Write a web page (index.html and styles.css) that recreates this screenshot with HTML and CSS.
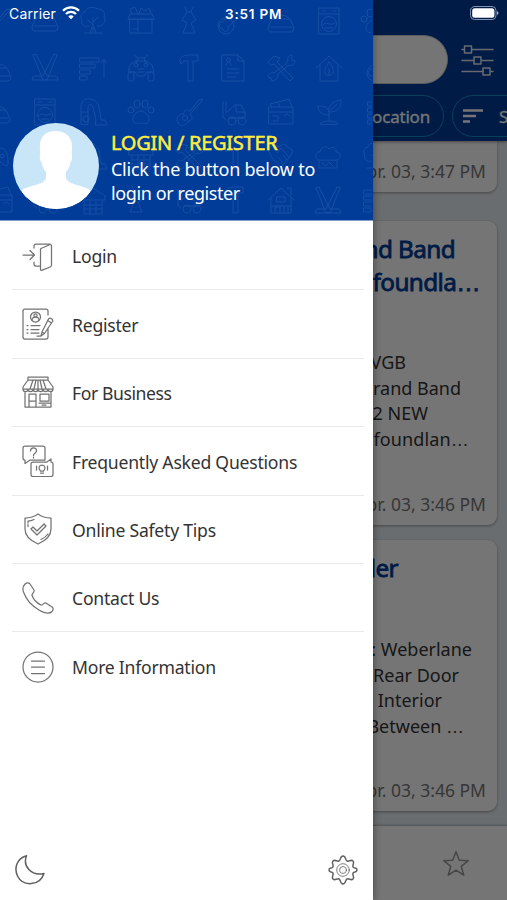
FILE: index.html
```html
<!DOCTYPE html>
<html lang="en">
<head>
<meta charset="utf-8">
<title>Menu</title>
<link rel="stylesheet" href="styles.css">
</head>
<body>
<div class="screen">
  <main class="app">
    <header class="topbar">
      <div class="searchrow">
        <div class="search"></div>
        <svg class="sliders" width="34" height="34" viewBox="0 0 34 34"><path d="M1 6.500h2M11 6.500h21M1 17.500h12M21 17.500h11M1 28.500h21M30 28.500h2"/><path d="M3.500 3h7v7h-7zM13 14h7v7h-7zM22 25h7v7h-7z"/></svg>
      </div>
      <div class="chips">
        <div class="chip chip-location">Location</div>
        <div class="chip chip-sort"><svg width="20" height="14" viewBox="0 0 20 14"><path d="M0 1.500h20M0 7h13M0 12.500h7"/></svg><span>Sort</span></div>
      </div>
    </header>
    <section class="feed">
      <article class="card first"><p class="date">Apr. 03, 3:47 PM</p></article>
      <article class="card second">
        <h2><span class="t1">nd Band</span><span class="t2">foundla<i>…</i></span></h2>
        <p class="body"><span class="a1">VGB</span><span class="a2">rand Band</span><span class="a3">2 NEW</span><span class="a4">foundlan<i>…</i></span></p>
        <p class="date">Apr. 03, 3:46 PM</p>
      </article>
      <article class="card third">
        <h2><span class="t3">ler</span></h2>
        <p class="body"><span class="b1">: Weberlane</span><span class="b2">Rear Door</span><span class="b3">Interior</span><span class="b4">Between <i>…</i></span></p>
        <p class="date">Apr. 03, 3:46 PM</p>
      </article>
    </section>
    <nav class="tabs"><svg width="28" height="28" viewBox="0 0 28 28"><path d="M14 1.800l3.300 8.500 9 .4-7.100 5.600 2.500 8.900L14 20.200l-7.700 5 2.500-8.900-7.100-5.600 9-.4z"/></svg></nav>
  </main>
  <div class="scrim"></div>

  <aside class="drawer">
    <div class="profile">
      <svg class="pattern" width="372" height="220" viewBox="0 0 372 220">
        <defs>
          <g id="tree"><path d="M0 11V-3M0 4l-5-5M0 1l5-5M-9 12H9M-3 12l2-6M3 12l-2-6M-4 5c-5 2-9-2-7-6-3-4 0-8 3-8 1-5 9-6 12-3 5-1 9 4 7 8 3 4-1 10-7 9"/></g>
          <g id="box"><path d="M-11-2h22v14h-22zM-13-2l2-5h22l2 5zM-3-2V12M-9-7l-2-5 5-2 3 7M-2-7l2-6 4 3 4-3 2 5M-8 8h4"/></g>
          <g id="washer"><path d="M-10-13h20v26h-20zM-10-7h20M-7-10h4M4-10h3"/><circle cy="3" r="7.500"/><path d="M-6 4c3-5 6 2 12-2M-4 7h8"/></g>
          <g id="sticks"><path d="M-12-13l3-1L2 8h8q3 0 3 4H-2L-12-13M12-13l-3-1L-2 8h-8q-3 0-3 4H2L12-13"/></g>
          <g id="sort"><path d="M-13-10H6v4h-19zM-13-4H2v4h-15zM-13 2H-3v4h-10zM-13 8h7v4h-7zM11 10V-9M8-5l3-4 3 4"/></g>
          <g id="atv"><path d="M-7-13l4 3h6l4-3M-5-7H5l6 4 2 7H6L3 8h-6l-3-4h-7l2-7zM-3-10l-2 6M3-10l2 6M-3 1h6M-3 4h6"/><rect x="-13" y="4" width="6" height="9" rx="2"/><rect x="7" y="4" width="6" height="9" rx="2"/><circle cx="-5" cy="-3" r="2"/><circle cx="5" cy="-3" r="2"/></g>
          <g id="hammer"><path d="M-10-8c1-4 5-5 9-5H8v6H3v20h-5V-7h-4l-3 3z"/></g>
          <g id="doc"><path d="M-11-13H5l6 6v20h-22zM5-13v6h6M-6 1H6M-6 5H6M-6 9H3M-7-3c0-4 5-4 5 0"/><circle cx="-4.500" cy="-8" r="2"/></g>
          <g id="tools"><path d="M-13-6l6-6 6 2-3 4L12 10l-3 3L-7-4l-3 1zM4-3l3-4c-1-4 1-6 4-6v5l3 1c0 4-4 5-6 4L-3 6c0 3-1 6-6 7l-1-3-3-1c1-4 4-5 6-4L2-2"/></g>
          <g id="house"><path d="M-13 0L0-12 13 0M-9-3v16H9V-3M0-6c4 5 5 8 4 11s-7 3-8 0 1-6 4-11zM0 1v6"/></g>
          <g id="paw"><path d="M0-1c4 0 9 5 8 9-1 5-5 3-8 3s-7 2-8-3c-1-4 4-9 8-9z"/><ellipse cx="-4" cy="-8" rx="3" ry="4"/><ellipse cx="4" cy="-8" rx="3" ry="4"/><circle cx="-10" cy="-2" r="3"/><circle cx="10" cy="-2" r="3"/></g>
          <g id="vacuum"><path d="M-12 12V-5C-12-17 4-15 6-5L8 8h4l2 5H2l1-5L0-5C-1-9-5-8-5-4V12zM-11 0h6"/><circle cx="-7" cy="7" r="3"/></g>
          <g id="guitar"><path d="M13-14l-3 1-9 11c-4-3-7 0-6 3-5-1-9 5-6 9s9 3 10-2c5 0 5-4 2-7L12-11z"/><circle cx="-4" cy="5" r="2.500"/></g>
          <g id="digger"><path d="M-11-10v15l3 3M-8-10v11M-7 0l8-7h6l4 7v6h-13M-5 6H9M2-7v7h9"/><circle cx="-2" cy="9" r="4"/><circle cx="8" cy="9" r="4"/></g>
          <g id="crate"><path d="M-12-5h24v17h-24zM-12 0h24M-9-5l-2-3L8-13l3 8M-8 4h5v5h-5M3 4l3-2 3 2M-3-9l2 4"/></g>
          <g id="plant"><path d="M0 8V0c-1-6 3-11 12-12 1 8-4 12-12 12-1-5-5-6-11-6 0 6 4 9 11 9M-9 12c0-4 18-4 18 0zM2-2l6-6"/></g>
          <g id="bowl"><path d="M-9 0H9l4 9q0 4-3 4h-20q-3 0-3-4zM-8 0c0-5 16-5 16 0M-11 8h22"/></g>
          <g id="bone"><path d="M-8-1L2-9c0-5 6-4 5 0 4 0 4 5 0 5L-2 4c1 5-4 6-5 2-5 0-5-6-1-7z"/><circle cx="-4" cy="3" r="8"/></g>
          <g id="dress"><path d="M-4-14l2 5-5 8 5 3-4 10h12L2 2l5-3-5-8 2-5M-2-9h4"/></g>
          <g id="home"><path d="M-13-1L0-13 13-1M-10-3v15h20V-3M-10 5h20M-6 12V6h5v6M3 6v6M7 6v6"/><path d="M-4-4h8v5h-8zM6-13h4v7"/></g>
          <g id="cloud"><path d="M-9 4c-6-2-3-9 1-8 2-7 8-6 9-3 4-4 8 0 7 3 6 0 5 7 1 8zM-9 4v8H9V4M-6 7l4 3 3-4 4 4"/></g>
          <g id="pad"><path d="M-7-7q-6 5-6 13c0 6 4 5 7 0H5c4 5 8 5 7-1 0-6-2-13-6-13zM-7-2v5M-9 0h5"/><circle cx="6" cy="0" r="2"/></g>
          <g id="shop"><path d="M-12-5L0-13l12 8v4h-24zM-9 0v13H9V0M-9 4H9M-9 8H9M-3 0v13M3 0v13"/></g>
          <g id="hands"><path d="M-13-7l6-5 5 3 5-3 9 7-4 7L0 11l-8-8zM-4-3l4-5 8 9M-2 2l4 5M2-1l4 5"/></g>
        </defs>
        <g class="motifs">
          <use href="#guitar" x="-4" y="23"/><use href="#bowl" x="45" y="18"/><use href="#tree" x="93" y="21"/><use href="#box" x="141" y="21"/><use href="#dress" x="189" y="21"/><use href="#bone" x="230" y="23"/><use href="#bowl" x="281" y="19"/><use href="#washer" x="329" y="21"/><use href="#paw" x="374" y="21"/>
          <use href="#bowl" x="-2" y="68"/><use href="#sticks" x="45" y="68"/><use href="#sort" x="93" y="68"/><use href="#atv" x="141" y="68"/><use href="#hammer" x="190" y="68"/><use href="#doc" x="233" y="68"/><use href="#tools" x="281" y="68"/><use href="#house" x="329" y="68"/><use href="#bone" x="379" y="70"/>
          <use href="#bowl" x="-3" y="110"/><use href="#washer" x="45" y="112"/><use href="#vacuum" x="93" y="112"/><use href="#paw" x="141" y="112"/><use href="#guitar" x="189" y="113"/><use href="#digger" x="234" y="112"/><use href="#crate" x="281" y="112"/><use href="#plant" x="329" y="112"/><use href="#sort" x="381" y="112"/>
          <use href="#pad" x="-4" y="156"/><use href="#vacuum" x="93" y="156"/><use href="#shop" x="141" y="156"/><use href="#tools" x="189" y="156"/><use href="#hammer" x="235" y="156"/><use href="#hands" x="281" y="156"/><use href="#cloud" x="328" y="156"/><use href="#tree" x="376" y="156"/>
          <use href="#crate" x="0" y="200"/><use href="#digger" x="45" y="200"/><use href="#shop" x="93" y="201"/><use href="#dress" x="136" y="200"/><use href="#digger" x="189" y="200"/><use href="#hammer" x="235" y="200"/><use href="#home" x="281" y="201"/><use href="#sticks" x="328" y="201"/><use href="#sort" x="377" y="200"/>
        </g>
      </svg>
      <div class="profile-row">
        <svg class="avatar" width="86" height="86" viewBox="0 0 86 86"><defs><clipPath id="disc"><circle cx="43" cy="43" r="43"/></clipPath></defs><g clip-path="url(#disc)"><path fill="#c8e6f7" d="M0 0h86v86H0z"/><path fill="#fff" d="M42 8c11 0 17 6 17 16 0 4-.5 6-.2 8 .8 1 .4 6-1.300 7-.6 5-2.500 8-4.500 10v6c2 7 17 7 24 12v19H9V67c8-5 22-5 24-12v-6c-2-2-4-6-4.500-10-1.700-1-2.100-6-1.300-7 .3-2-.7-6-.2-11C28 12 34 8 42 8z"/></g></svg>
        <div class="greeting"><strong>LOGIN / REGISTER</strong><span>Click the button below to</span><span>login or register</span></div>
      </div>
    </div>
    <ul class="menu">
      <li><svg viewBox="0 0 32 32"><path d="M1 15h11M8 10.500l4.500 4.500L8 19.500M12 8V6q0-2 2-2h14M12 22v2q0 2 2 2h4M19 8.500l8.500-3.800q2-.7 2 1.300v19q0 1.500-1.300 2l-8 3.200q-1.700.5-1.700-1V10q0-1 .5-1.500z"/></svg><span>Login</span></li>
      <li><svg viewBox="0 0 32 32"><path d="M26 7V3q0-2-2-2H3Q1 1 1 3v26q0 2 2 2h21q2 0 2-2v-9M20 24l-1 4 3.500-2.500 8-12c1-2-2-4.500-4-2.500zM25.500 12.500l4 2.500M20 24l2.500 1.500M9 17.500h9M9 21.500h8M9 25h8M5 17.500h1M5 21.500h1M5 25h1M15 28h4"/><circle cx="13.500" cy="9" r="5"/><circle cx="13.500" cy="7.500" r="1.600"/><path d="M10 12c0-4 7-4 7 0"/></svg><span>Register</span></li>
      <li><svg viewBox="0 0 32 32"><path d="M6 1h20v3H6zM6 4L1 11v2h30v-2L26 4M11 4l-3 9M14 4l-2 9M18 4l2 9M21 4l3 9M16 4v9M1 13c0 3.500 5 3.500 5 0 0 3.500 5 3.500 5 0 0 3.500 5 3.500 5 0 0 3.500 5 3.500 5 0 0 3.500 5 3.500 5 0 0 3.500 5 3.500 5 0M3 16v15h26V16M7 31V18h7v13M7 25h7M18 18h9v7h-9zM17 27h11M20 29h4"/></svg><span class="tight">For Business</span></li>
      <li><svg viewBox="0 0 32 32"><path d="M8 15l-5 3.500V15Q1 15 1 13V3q0-2 2-2h18q2 0 2 2v12zM8.500 6c0-4 6-4 6-.5 0 3-3 2.500-3 5M11.500 12v1"/><path fill="#fff" d="M11 17h14l4-3v3q2 0 2 2v10.500q0 2-2 2H11q-2 0-2-2V19q0-2 2-2z"/><path d="M18.500 26c-3-3-1-6 1.500-6s4.500 3 1.500 6zM18.500 28h3M14.500 21v4M25.500 21v4"/></svg><span>Frequently Asked Questions</span></li>
      <li><svg viewBox="0 0 32 32"><path d="M16 1c4 3 8 4 13 4v11c0 8-6 12-13 15C9 28 3 24 3 16V5c5 0 9-1 13-4zM6 10V8c3 0 4-.5 6-1.500M6 11.500v2M26 21c-2 3-4 4-7 5.500M9 16l2-2 4 4 7-7 2 2-9 9z"/></svg><span>Online Safety Tips</span></li>
      <li><svg viewBox="0 0 32 32"><path d="M3 2C5 .5 7 .5 8 2l4 6c1 2-2 3.500-2 5 1 4 5 8 9 10 2 .5 3-3 5-2l6 4c1.500 1 1.500 3 0 4.500-3 3-8 1.500-13-1.500C10 24 4 17 1.500 10c-1-3-.5-6 1.500-8z"/></svg><span>Contact Us</span></li>
      <li><svg viewBox="0 0 32 32"><circle cx="16" cy="16" r="15"/><path d="M9.500 10h13M9.500 16h13M9.500 22.500h13"/></svg><span>More Information</span></li>
    </ul>
    <footer class="tools">
      <svg width="32" height="32" viewBox="0 0 32 32"><path d="M12.500 1.800C8.500 12 17 22.500 30 19.500 26 32 9 33 3.500 22-.5 13 3.500 4.500 12.500 1.800z"/></svg>
      <svg width="32" height="32" viewBox="0 0 32 32"><path d="M16 2c3 0 2 4 4 5s4-2 6 0-1 4 0 6 4 0 4 3-3 1-4 3 2 4 0 6-4-1-6 0-1 5-4 5-2-4-4-5-4 2-6 0 1-4 0-6-4 0-4-3 3-1 4-3-2-4 0-6 4 1 6 0 1-5 4-5z"/><circle cx="16" cy="16" r="6.300" stroke-width=".8"/><circle cx="16" cy="16" r="3.500" stroke-width=".8"/></svg>
    </footer>
  </aside>

  <div class="status">
    <span class="carrier">Carrier</span>
    <svg class="wifi" width="18" height="14" viewBox="0 0 18 14"><path d="M1 4.800c4.500-4.500 11.500-4.500 16 0M4 8c2.800-2.800 7.200-2.800 10 0"/><path class="dot" d="M6.300 10.400c1.600-1.500 3.800-1.500 5.400 0L9 13.200z"/></svg>
    <span class="clock">3:51 PM</span>
    <svg class="battery" width="30" height="14" viewBox="0 0 30 14"><rect class="shell" x=".5" y=".5" width="25.500" height="13" rx="4"/><rect x="2.200" y="2.200" width="22.200" height="9.600" rx="2.500"/><path d="M27.300 5q2 2 0 4z"/></svg>
  </div>
</div>
</body>
</html>
```

FILE: styles.css
```css
* { box-sizing: border-box; }
body { margin: 0; font-family: "Noto Sans", sans-serif; color: #333; }
h2, p, ul { margin: 0; padding: 0; font-weight: 400; }
svg { display: block; flex: none; fill: none; stroke-linecap: round; stroke-linejoin: round; }
.screen { position: relative; width: 507px; height: 900px; overflow: hidden; }

/* App content under the drawer */
.app { display: flex; flex-direction: column; height: 900px; background: #e7edf1; isolation: isolate; }
.topbar { height: 141px; flex: none; padding-top: 35px; background: #003c98; box-shadow: 0 1px 3px rgba(0,0,0,.4); z-index: 1; overflow: hidden; }
.searchrow { display: flex; height: 49px; gap: 13px; }
.search { width: 448px; flex: none; border-radius: 25px; background: #fff; border: 1px solid #c9c9c9; }
.sliders { margin-top: 8px; stroke: #e3e8f3; stroke-width: 1.5; }
.chips { display: flex; gap: 8px; padding-top: 11px; }
.chip { height: 42px; border: 1px solid #178bc4; border-radius: 21px; color: #fff; font-size: 17px; line-height: 41px; letter-spacing: -.2px; -webkit-text-stroke: .3px #fff; }
.chip-location { width: 444px; flex: none; text-align: right; padding-right: 13px; }
.chip-sort { display: flex; align-items: center; gap: 16px; width: 120px; flex: none; padding-left: 10px; }
.chip-sort svg { stroke: #fff; stroke-width: 2.4; stroke-linecap: butt; }
.feed { display: flex; flex-direction: column; flex: 1; padding-right: 10px; }
.card { display: flex; flex-direction: column; background: #fff; border-radius: 9px; box-shadow: 0 1px 3px rgba(0,0,0,.35); text-align: right; }
.first { height: 51px; margin-bottom: 29px; border-radius: 0 0 9px 9px; }
.second { height: 304px; margin-bottom: 15px; }
.third { height: 271px; }
.card span { display: block; }
.card i { font-family: "Liberation Sans", sans-serif; font-style: normal; line-height: 1; }
.card h2 { height: 129px; padding-top: 11px; font-size: 24.3px; line-height: 33px; letter-spacing: -.6px; color: #003c98; -webkit-text-stroke: .8px #003c98; }
.third h2 { height: 97px; padding-top: 11px; }
.body { font-size: 18px; line-height: 25.7px; }
.date { margin-top: auto; padding: 0 11px 8px 0; font-size: 17.5px; line-height: 25px; color: #777; }
.t1 { padding-right: 42px; } .t2 { padding-right: 17px; } .t3 { padding-right: 99px; }
.a1 { padding-right: 91px; } .a2 { padding-right: 36px; } .a3 { padding-right: 69px; } .a4 { padding-right: 28px; letter-spacing: .15px; }
.b1 { padding-right: 25px; } .b2 { padding-right: 38px; } .b3 { padding-right: 55px; } .b4 { padding-right: 33px; }
.tabs { display: flex; justify-content: flex-end; height: 74px; padding: 24px 37px 0 0; background: #fff; box-shadow: 0 -1px 2px rgba(0,0,0,.25); }
.tabs svg { stroke: #999; stroke-width: 1.5; }
.scrim { position: absolute; inset: 0; background: rgba(0,0,0,.54); }

/* Drawer */
.drawer { position: absolute; top: 0; left: 0; display: flex; flex-direction: column; width: 372.5px; height: 900px; background: #fff; box-shadow: 1px 0 7px rgba(0,0,0,.35); }
.profile { position: relative; height: 221px; flex: none; padding: 123px 0 0 13px; background: #003c98; border-bottom: 1px solid #7fa0cf; }
.pattern { position: absolute; top: 0; left: 0; }
.motifs { stroke: #174fa5; stroke-width: 1; }
.profile-row { position: relative; display: flex; gap: 12px; }
.greeting { display: flex; flex-direction: column; align-items: flex-start; padding-top: 6px; color: #fff; font-size: 18px; line-height: 24.5px; letter-spacing: -.26px; white-space: nowrap; }
.greeting span:last-child { letter-spacing: -.4px; }
.greeting strong { margin-bottom: -.2px; font-weight: 400; font-size: 20px; line-height: 28px; letter-spacing: -.26px; color: #ffec3d; -webkit-text-stroke: .5px #ffec3d; }
.menu { flex: 1; padding: 1px 8.500px 0 12px; list-style: none; }
.menu li { display: flex; align-items: center; gap: 18px; height: 68.4px; padding-left: 10px; border-bottom: 1px solid #e9e9e9; font-size: 17.6px; letter-spacing: -.23px; white-space: nowrap; }
.menu li:last-child { border: 0; }
.menu svg { width: 32px; height: 32px; stroke: #737373; stroke-width: 1.25; }
.menu span { padding-top: 1.600px; }
.menu .tight { letter-spacing: -.42px; }
.tools { display: flex; justify-content: space-between; padding: 0 14px 14px; }
.tools svg { stroke: #606060; stroke-width: 1.5; }

/* Status bar */
.status { position: absolute; inset: 0 0 auto; display: flex; height: 28px; padding: 6px 7px 0 9px; color: #fff; font-family: Inter, sans-serif; font-size: 13.5px; line-height: 16px; }
.carrier { width: 53px; font-size: 14px; letter-spacing: .15px; }
.wifi { stroke: #fff; stroke-width: 2.3; stroke-linecap: butt; }
.wifi .dot { fill: #fff; stroke: none; }
.clock { margin-left: 145px; font-weight: 600; letter-spacing: .8px; }
.battery { margin-left: auto; fill: #fff; }
.battery .shell { fill: none; stroke: #8292b4; }
```
